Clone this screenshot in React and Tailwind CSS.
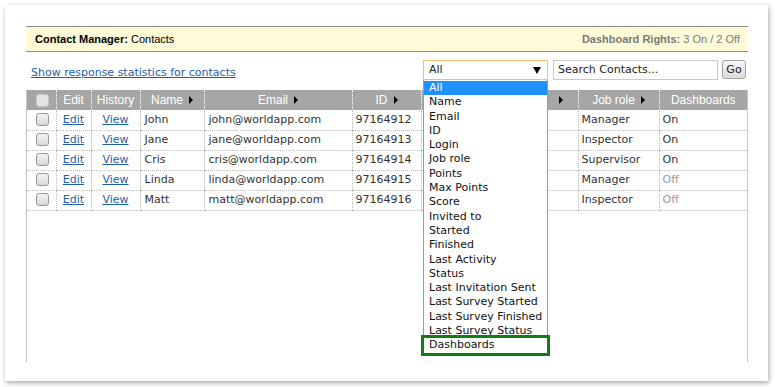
import React from 'react';

const contacts = [
  { name: 'John', email: 'john@worldapp.com', id: '97164912', role: 'Manager', dash: 'On' },
  { name: 'Jane', email: 'jane@worldapp.com', id: '97164913', role: 'Inspector', dash: 'On' },
  { name: 'Cris', email: 'cris@worldapp.com', id: '97164914', role: 'Supervisor', dash: 'On' },
  { name: 'Linda', email: 'linda@worldapp.com', id: '97164915', role: 'Manager', dash: 'Off' },
  { name: 'Matt', email: 'matt@worldapp.com', id: '97164916', role: 'Inspector', dash: 'Off' },
];

const fields = [
  'All', 'Name', 'Email', 'ID', 'Login', 'Job role', 'Points', 'Max Points', 'Score',
  'Invited to', 'Started', 'Finished', 'Last Activity', 'Status', 'Last Invitation Sent',
  'Last Survey Started', 'Last Survey Finished', 'Last Survey Status',
];

function Arrow() {
  return <span className="inline-block ml-[6px] w-0 h-0 border-y-[4px] border-y-transparent border-l-[4px] border-l-black align-[0px]" />;
}

function Checkbox({ header }) {
  return (
    <span
      className={`inline-block w-[13px] h-[13px] rounded-[3px] border align-middle ${
        header ? 'border-[#c4c4c4] bg-[#e4e4e4]' : 'border-[#9a9a9a] bg-gradient-to-b from-[#f4f4f4] to-[#d8d8d8]'
      }`}
    />
  );
}

export default function App() {
  const th = 'h-[20px] p-0 font-normal text-white text-[12px] text-center border-l border-dotted border-l-white first:border-l-0';
  const td = 'h-[20px] p-0 border-l border-b border-dotted border-[#bdbdbd] first:border-l-0';

  return (
    <div className="w-[775px] h-[387px] bg-white p-[5px]" style={{ fontFamily: '"DejaVu Sans", Verdana, sans-serif' }}>
      <div className="w-[763px] h-[376px] bg-white shadow-[1px_2px_5px_rgba(0,0,0,0.35)] pt-[21px] pl-[21px] pr-[20px]">
        {/* title bar */}
        <div
          className="h-[26px] bg-[#fffad8] border-y border-[#8c8c8c] flex items-center justify-between pl-[9px] pr-[8px] text-[11px]"
          style={{ fontFamily: '"Liberation Sans", Arial, sans-serif' }}
        >
          <div className="text-black">
            <b>Contact Manager:</b> Contacts
          </div>
          <div className="text-[#7a7a7a]">
            <b>Dashboard Rights:</b> 3 On / 2 Off
          </div>
        </div>

        {/* toolbar */}
        <div className="mt-[8px] flex items-end justify-between h-[20px] text-[11px]">
          <a href="#" className="ml-[5px] mb-[-1px] text-[#1f5fa8] underline">Show response statistics for contacts</a>
          <div className="flex items-start mr-[2px]">
            <div className="relative">
              <div className="w-[125px] h-[20px] border border-[#f2c26a] flex items-center justify-between pl-[5px] pr-[6px] text-[#222]">
                <span>All</span>
                <span className="w-0 h-0 border-x-[4px] border-x-transparent border-t-[7px] border-t-black" />
              </div>
              {/* open dropdown */}
              <div className="absolute left-0 top-[20px] w-[125px] z-10 bg-white border-x border-[#7d9fd6] pt-[1px]">
                {fields.map((f, i) => (
                  <div
                    key={f}
                    className={`h-[14.3px] leading-[14.3px] pl-[5px] whitespace-nowrap ${i === 0 ? 'bg-[#1e90ff] text-white' : 'text-[#111]'}`}
                  >
                    {f}
                  </div>
                ))}
                <div className="relative h-[14.3px] leading-[14.3px] pl-[5px] bg-white text-[#111] outline-[3px] outline-solid outline-[#127d12]">
                  Dashboards
                </div>
              </div>
            </div>
            <div className="ml-[5px] w-[165px] h-[20px] border border-[#c9c9c9] flex items-center pl-[4px] text-[#222]">
              Search Contacts...
            </div>
            <button className="ml-[4px] w-[24px] h-[19px] border border-[#a3a3a3] rounded-[3px] bg-gradient-to-b from-[#f8f8f8] to-[#dcdcdc] text-[11px] text-[#222] leading-none">
              Go
            </button>
          </div>
        </div>

        {/* table */}
        <div className="mt-[10px] h-[272px] border-x border-[#c6c6c6]">
          <table className="w-full table-fixed border-collapse text-[11px] text-[#333]">
            <thead>
              <tr className="bg-[#a6a6a6]" style={{ fontFamily: '"Liberation Sans", Arial, sans-serif' }}>
                <th className={`${th} w-[29px] pl-[2px]`}><Checkbox header /></th>
                <th className={`${th} w-[35px]`}>Edit</th>
                <th className={`${th} w-[49px]`}>History</th>
                <th className={`${th} w-[64px]`}>Name<Arrow /></th>
                <th className={`${th} w-[148px]`}>Email<Arrow /></th>
                <th className={`${th} w-[69px]`}>ID<Arrow /></th>
                <th className={`${th} w-[80px]`}></th>
                <th className={`${th} w-[77px] !text-right pr-[15px]`}><Arrow /></th>
                <th className={`${th} w-[81px]`}>Job role<Arrow /></th>
                <th className={th}>Dashboards</th>
              </tr>
            </thead>
            <tbody>
              {contacts.map((c) => (
                <tr key={c.id}>
                  <td className={`${td} text-center pl-[2px]`}><Checkbox /></td>
                  <td className={`${td} text-center`}><a href="#" className="text-[#1f5fa8] underline">Edit</a></td>
                  <td className={`${td} text-center`}><a href="#" className="text-[#1f5fa8] underline">View</a></td>
                  <td className={`${td} pl-[4px]`}>{c.name}</td>
                  <td className={`${td} pl-[4px]`}>{c.email}</td>
                  <td className={`${td} pl-[3px]`}>{c.id}</td>
                  <td className={td}></td>
                  <td className={td}></td>
                  <td className={`${td} pl-[3px]`}>{c.role}</td>
                  <td className={`${td} pl-[3px] ${c.dash === 'Off' ? 'text-[#9a9a9a]' : ''}`}>{c.dash}</td>
                </tr>
              ))}
            </tbody>
          </table>
        </div>
      </div>
    </div>
  );
}
